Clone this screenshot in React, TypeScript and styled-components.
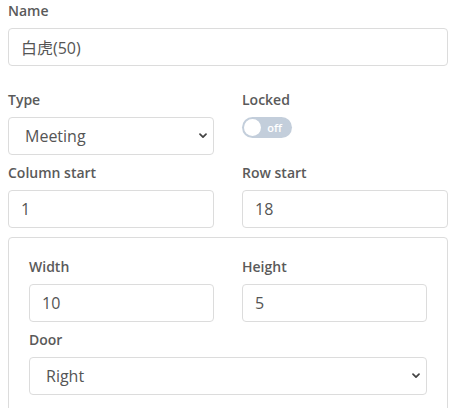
import React from "react";
import styled, { createGlobalStyle } from "styled-components";

const Global = createGlobalStyle`
  html, body { margin: 0; padding: 0; background: #fff; }
  body { font-family: "Open Sans", "Noto Sans CJK SC", sans-serif; color: #495057; }
  * { box-sizing: border-box; }
`;

const chevron =
  "data:image/svg+xml;utf8," +
  encodeURIComponent(
    '<svg xmlns="http://www.w3.org/2000/svg" width="8" height="6" viewBox="0 0 8 6"><path d="M1 1.2 L4 4.2 L7 1.2" fill="none" stroke="#444" stroke-width="1.7" stroke-linecap="round" stroke-linejoin="round"/></svg>'
  );

const Form = styled.div`
  padding: 0 13px 0 8px;
  width: 461px;
`;

const Row = styled.div<{ $mb?: number }>`
  display: grid;
  grid-template-columns: 1fr 1fr;
  column-gap: 28px;
  margin-bottom: ${(p) => p.$mb ?? 0}px;
`;

const Group = styled.div<{ $mb?: number }>`
  display: flex;
  flex-direction: column;
  margin-bottom: ${(p) => p.$mb ?? 7}px;
`;

const Label = styled.label`
  display: block;
  font-size: 14px;
  font-weight: 600;
  line-height: 22px;
  color: #5a5a5a;
  margin-bottom: 6px;
`;

const Input = styled.input`
  display: block;
  width: 100%;
  height: 38px;
  padding: 0 12px;
  font-family: "Open Sans", "Noto Sans CJK SC", sans-serif;
  font-size: 16px;
  color: #555;
  background: #fff;
  border: 1px solid #dcdcdc;
  border-radius: 4px;
  outline: none;
`;

const Select = styled.select`
  display: block;
  width: 100%;
  height: 38px;
  padding: 0 24px 0 16px;
  font-family: "Open Sans", sans-serif;
  font-size: 16px;
  color: #555;
  appearance: none;
  -webkit-appearance: none;
  background: #fff url("${chevron}") no-repeat right 6px center;
  background-size: 8px 6px;
  border: 1px solid #dcdcdc;
  border-radius: 4px;
  outline: none;
`;

const Toggle = styled.div`
  position: relative;
  width: 50px;
  height: 21px;
  border-radius: 11px;
  background: #c3cedb;
  display: flex;
  align-items: center;
  justify-content: flex-end;
  padding-right: 10px;
`;

const Knob = styled.span`
  position: absolute;
  left: 2px;
  top: 2px;
  width: 17px;
  height: 17px;
  border-radius: 50%;
  background: #fff;
`;

const ToggleText = styled.span`
  font-size: 11px;
  font-weight: 600;
  color: #fff;
  line-height: 1;
`;

const Panel = styled.div`
  border: 1px solid #dcdcdc;
  border-radius: 4px;
  padding: 18px 20px 20px;
`;

export default function App() {
  return (
    <>
      <Global />
      <Form>
        <Group $mb={23}>
          <Label>Name</Label>
          <Input defaultValue="白虎(50)" />
        </Group>
        <Row>
          <Group>
            <Label>Type</Label>
            <Select defaultValue="Meeting">
              <option>Meeting</option>
              <option>Desk</option>
            </Select>
          </Group>
          <Group>
            <Label>Locked</Label>
            <Toggle>
              <Knob />
              <ToggleText>off</ToggleText>
            </Toggle>
          </Group>
        </Row>
        <Row $mb={2}>
          <Group>
            <Label>Column start</Label>
            <Input defaultValue="1" />
          </Group>
          <Group>
            <Label>Row start</Label>
            <Input defaultValue="18" />
          </Group>
        </Row>
        <Panel>
          <Row>
            <Group>
              <Label>Width</Label>
              <Input defaultValue="10" />
            </Group>
            <Group>
              <Label>Height</Label>
              <Input defaultValue="5" />
            </Group>
          </Row>
          <Group>
            <Label>Door</Label>
            <Select defaultValue="Right">
              <option>Left</option>
              <option>Right</option>
            </Select>
          </Group>
        </Panel>
      </Form>
    </>
  );
}
